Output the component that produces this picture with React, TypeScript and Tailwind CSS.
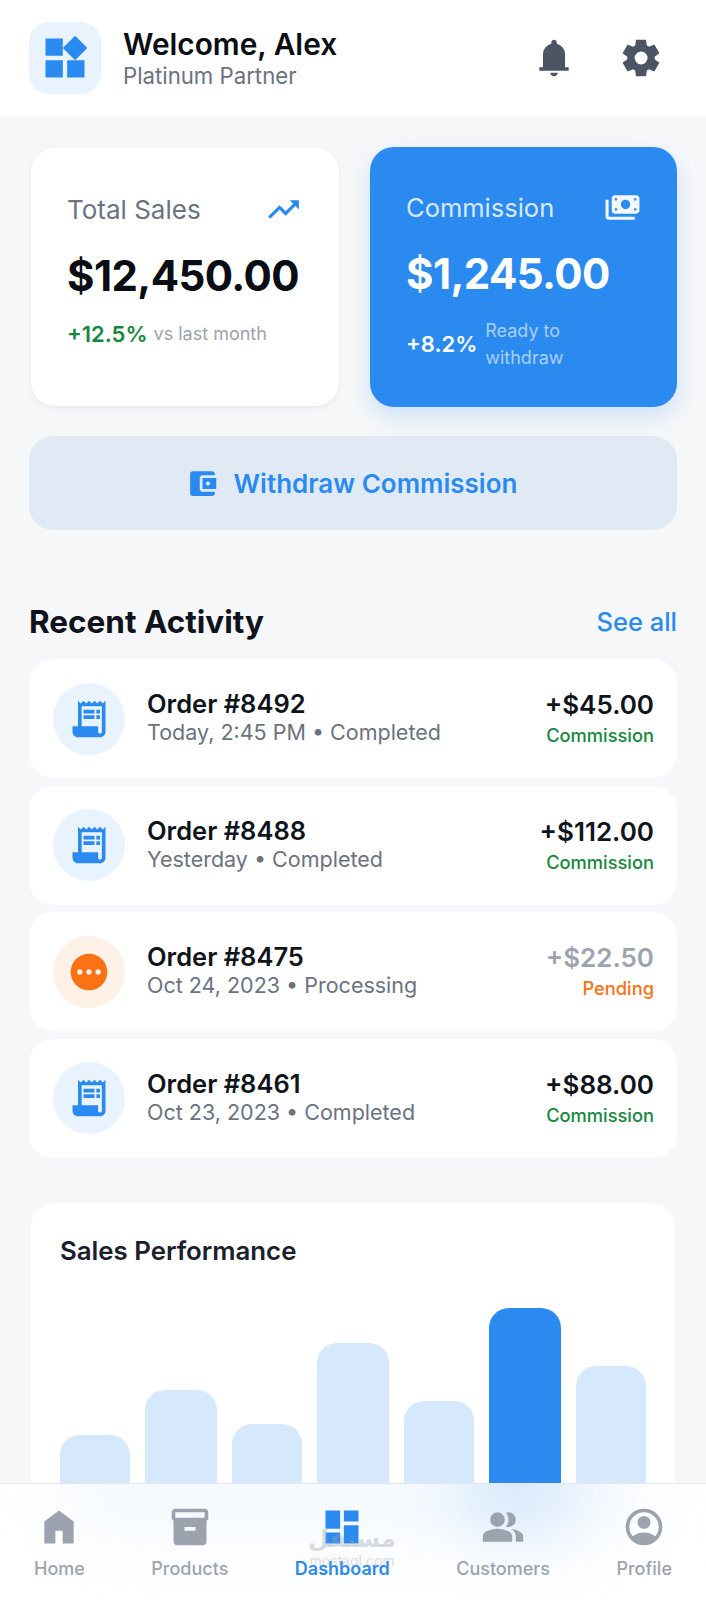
import React from 'react';

const BLUE = 'text-[#2b8aef]';

const paths = {
  widgets: 'M16.65 13L11 7.35 16.65 1.7 22.3 7.35 16.65 13zM3 11V3h8v8H3zm10 10v-8h8v8h-8zM3 21v-8h8v8H3z',
  bell: 'M4 19v-2h2v-7q0-2.075 1.25-3.688T10.5 4.2v-.7q0-.625.438-1.063T12 2t1.063.438.437 1.062v.7q2 .5 3.25 2.113T18 10v7h2v2H4zm8 3q-.825 0-1.413-.588T10 20h4q0 .825-.588 1.412T12 22z',
  gear: 'm9.25 22-.4-3.2q-.325-.125-.612-.3t-.563-.375L4.7 19.375l-2.75-4.75 2.575-1.95Q4.5 12.5 4.5 12.337v-.675q0-.162.025-.337L1.95 9.375l2.75-4.75 2.975 1.25q.275-.2.575-.375t.6-.3l.4-3.2h5.5l.4 3.2q.325.125.613.3t.562.375l2.975-1.25 2.75 4.75-2.575 1.95q.025.175.025.338v.675q0 .162-.05.337l2.575 1.95-2.75 4.75-2.95-1.25q-.275.2-.575.375t-.6.3l-.4 3.2h-5.5zm2.8-6.5q1.45 0 2.475-1.025T15.55 12t-1.025-2.475T12.05 8.5q-1.475 0-2.488 1.025T8.55 12t1.012 2.475T12.05 15.5z',
  trending: 'M16 6l2.29 2.29-4.88 4.88-4-4L2 16.59 3.41 18l6-6 4 4 6.3-6.29L22 12V6z',
  // bill with corner notches, drawn with evenodd so the notches and the centre are cut out
  payments: 'M19 14V6c0-1.1-.9-2-2-2H3c-1.1 0-2 .9-2 2v8c0 1.1.9 2 2 2h14c1.1 0 2-.9 2-2zm-9-1c-1.66 0-3-1.34-3-3s1.34-3 3-3 3 1.34 3 3-1.34 3-3 3zM3 6h1.5v1.5H3zM15.5 6H17v1.5h-1.5zM3 12.5h1.5V14H3zM15.5 12.5H17V14h-1.5zM23 7v11c0 1.1-.9 2-2 2H4v-2h17V7h2z',
  wallet: 'M21 18v1c0 1.1-.9 2-2 2H5c-1.11 0-2-.9-2-2V5c0-1.1.89-2 2-2h14c1.1 0 2 .9 2 2v1h-9c-1.11 0-2 .9-2 2v8c0 1.1.89 2 2 2h9zm-9-2h10V8H12v8zm4-2.5c-.83 0-1.5-.67-1.5-1.5s.67-1.5 1.5-1.5 1.5.67 1.5 1.5-.67 1.5-1.5 1.5z',
  receipt: 'M19.5 3.5 18 2l-1.5 1.5L15 2l-1.5 1.5L12 2l-1.5 1.5L9 2 7.5 3.5 6 2v14H3v3c0 1.66 1.34 3 3 3h12c1.66 0 3-1.34 3-3V2l-1.5 1.5zM19 19c0 .55-.45 1-1 1s-1-.45-1-1v-3H8V5h11v14zM9 7h6v2H9zm7 0h2v2h-2zm-7 3h6v2H9zm7 0h2v2h-2z',
  pending: 'M12 2C6.48 2 2 6.48 2 12s4.48 10 10 10 10-4.48 10-10S17.52 2 12 2zM7 13.5c-.83 0-1.5-.67-1.5-1.5s.67-1.5 1.5-1.5 1.5.67 1.5 1.5-.67 1.5-1.5 1.5zm5 0c-.83 0-1.5-.67-1.5-1.5s.67-1.5 1.5-1.5 1.5.67 1.5 1.5-.67 1.5-1.5 1.5zm5 0c-.83 0-1.5-.67-1.5-1.5s.67-1.5 1.5-1.5 1.5.67 1.5 1.5-.67 1.5-1.5 1.5z',
  home: 'M4 21V9l8-6 8 6v12h-6v-7h-4v7H4z',
  box: 'M20 2H4c-1 0-2 .9-2 2v3.01c0 .72.43 1.34 1 1.69V20c0 1.1 1.1 2 2 2h14c.9 0 2-.9 2-2V8.7c.57-.35 1-.97 1-1.69V4c0-1.1-1-2-2-2zm-5 12H9v-2h6v2zm5-7H4V4l16-.02V7z',
  dashboard: 'M3 13h8V3H3v10zm0 8h8v-6H3v6zm10 0h8V11h-8v10zm0-18v6h8V3h-8z',
  group: 'M1 20v-2.8q0-.85.438-1.562T2.6 14.55q1.55-.775 3.15-1.162T9 13q1.65 0 3.25.388t3.15 1.162q.725.375 1.163 1.088T17 17.2V20H1zm18 0v-3q0-1.1-.612-2.113T16.65 13.15q1.275.15 2.4.513t2.1.887q.9.5 1.375 1.112T23 17v3h-4zM9 12q-1.65 0-2.825-1.175T5 8t1.175-2.825T9 4t2.825 1.175T13 8t-1.175 2.825T9 12zm10-4q0 1.65-1.175 2.825T15 12q-.275 0-.7-.062t-.7-.138q.675-.8 1.038-1.775T15 8t-.362-2.025T13.6 4.2q.35-.125.7-.163T15 4q1.65 0 2.825 1.175T19 8z',
  profile: 'M5.85 17.1q1.275-.975 2.85-1.538T12 15t3.3.563 2.85 1.537q.875-1.025 1.363-2.325T20 12q0-3.325-2.337-5.662T12 4 6.337 6.338 4 12q0 1.475.488 2.775T5.85 17.1zM12 13q-1.475 0-2.488-1.012T8.5 9.5t1.012-2.488T12 6t2.488 1.012T15.5 9.5t-1.012 2.488T12 13zm0 9q-2.075 0-3.9-.788t-3.175-2.137T2.788 15.9 2 12t.788-3.9 2.137-3.175T8.1 2.788 12 2t3.9.788 3.175 2.137T21.213 8.1 22 12t-.788 3.9-2.137 3.175-3.175 2.138T12 22z',
};

function Icon({ d, className, evenOdd }: { d: string; className: string; evenOdd?: boolean }) {
  return (
    <svg viewBox="0 0 24 24" fill="currentColor" className={className}>
      <path d={d} fillRule={evenOdd ? 'evenodd' : undefined} />
    </svg>
  );
}

const orders = [
  { id: 'Order #8492', sub: 'Today, 2:45 PM • Completed', amount: '+$45.00' },
  { id: 'Order #8488', sub: 'Yesterday • Completed', amount: '+$112.00' },
  { id: 'Order #8475', sub: 'Oct 24, 2023 • Processing', amount: '+$22.50', pending: true },
  { id: 'Order #8461', sub: 'Oct 23, 2023 • Completed', amount: '+$88.00' },
];

const bars = [
  { h: 'h-[48px]', w: 'w-[70px]' },
  { h: 'h-[93px]', w: 'w-[72px]' },
  { h: 'h-[59px]', w: 'w-[70px]' },
  { h: 'h-[140px]', w: 'w-[72px]' },
  { h: 'h-[82px]', w: 'w-[70px]' },
  { h: 'h-[175px]', w: 'w-[72px]', active: true },
  { h: 'h-[117px]', w: 'w-[70px]' },
];

const tabs = [
  { label: 'Home', d: paths.home },
  { label: 'Products', d: paths.box },
  { label: 'Dashboard', d: paths.dashboard, active: true },
  { label: 'Customers', d: paths.group },
  { label: 'Profile', d: paths.profile },
];

function OrderRow({ id, sub, amount, pending }: { id: string; sub: string; amount: string; pending?: boolean }) {
  return (
    <div className="flex h-[119px] items-center rounded-[24px] bg-white pl-[24px] pr-[23px]">
      <div className={`flex h-[72px] w-[72px] shrink-0 items-center justify-center rounded-full ${pending ? 'bg-[#fef1e8] text-[#fb7214]' : 'bg-[#e8f3fe] text-[#2b8aef]'}`}>
        <Icon d={pending ? paths.pending : paths.receipt} className="h-[44px] w-[44px]" />
      </div>
      <div className="mb-[1px] ml-[22px] flex-1">
        <div className="text-[25.5px] leading-[30px] font-semibold text-[#0f141c]">{id}</div>
        <div className="mt-[-2px] text-[21.5px] leading-[30px] text-[#6b7280]">{sub}</div>
      </div>
      <div className="text-right">
        <div className={`mt-[3px] text-[26px] leading-[30px] font-semibold ${pending ? 'text-[#9ca3af]' : 'text-[#0f141c]'}`}>{amount}</div>
        <div className={`text-[18.3px] leading-[30px] font-medium ${pending ? 'text-[#fb7214]' : 'text-[#15883e]'}`}>
          {pending ? 'Pending' : 'Commission'}
        </div>
      </div>
    </div>
  );
}

export default function App() {
  return (
    <div className="relative h-[1600px] w-[706px] overflow-hidden bg-[#f6f7f9] font-[Inter,sans-serif]">
      <header className="flex h-[116px] items-center bg-white pl-[29px] pr-[43px]">
        <div className={`flex h-[72px] w-[72px] items-center justify-center rounded-[20px] bg-[#e8f3fe] ${BLUE}`}>
          <Icon d={paths.widgets} className="h-[52px] w-[52px]" />
        </div>
        <div className="ml-[22px] flex-1">
          <div className="text-[29.8px] leading-[36px] font-semibold text-[#0a0d14]">Welcome, Alex</div>
          <div className="text-[22.2px] leading-[28px] text-[#6b7280]">Platinum Partner</div>
        </div>
        <div className="flex gap-[43px] text-[#4b5563]">
          <Icon d={paths.bell} className="h-[44px] w-[44px]" />
          <Icon d={paths.gear} className="h-[44px] w-[44px]" />
        </div>
      </header>

      <main className="px-[29px] pt-[31px]">
        <div className="flex items-center justify-between">
          <div className="ml-[2px] h-[258px] w-[308px] rounded-[24px] bg-white px-[36px] pt-[43px] shadow-[0_2px_6px_rgba(0,0,0,0.06)]">
            <div className="flex items-center justify-between">
              <span className="text-[26px] leading-[34px] text-[#6b7280]">Total Sales</span>
              <Icon d={paths.trending} className={`mr-[1px] h-[37px] w-[37px] ${BLUE}`} />
            </div>
            <div className="mt-[20px] text-[42px] leading-[56px] font-bold tracking-[-0.6px] text-[#0a0d14]">$12,450.00</div>
            <div className="mt-[15px] flex items-center gap-[6px]">
              <span className="text-[22px] leading-[30px] font-semibold text-[#15883e]">+12.5%</span>
              <span className="text-[18px] leading-[30px] text-[#9ca3af]">vs last month</span>
            </div>
          </div>
          <div className="h-[260px] w-[307px] rounded-[24px] bg-[#2b8aef] px-[36px] pt-[42px] shadow-[0_10px_24px_rgba(43,138,239,0.2)]">
            <div className="flex items-center justify-between">
              <span className="text-[25.5px] leading-[34px] text-[#d8e9fc]">Commission</span>
              <Icon d={paths.payments} evenOdd className="h-[37px] w-[37px] -scale-x-100 text-[#f2f8fe]" />
            </div>
            <div className="mt-[20px] text-[42px] leading-[56px] font-bold tracking-[-0.6px] text-white">$1,245.00</div>
            <div className="mt-[15px] flex items-center gap-[8px]">
              <span className="text-[22px] leading-[30px] font-semibold text-white">+8.2%</span>
              <span className="text-[18px] leading-[27px] text-white/60">
                Ready to
                <br />
                withdraw
              </span>
            </div>
          </div>
        </div>

        <button className={`mt-[29px] flex h-[94px] w-full items-center justify-center gap-[15px] rounded-[24px] bg-[#e0eaf5] pr-[3px] ${BLUE}`}>
          <Icon d={paths.wallet} className="h-[33px] w-[33px]" />
          <span className="text-[26px] font-semibold">Withdraw Commission</span>
        </button>

        <div className="mt-[72px] flex items-center justify-between">
          <h2 className="text-[31.5px] leading-[40px] font-bold text-[#0f141c]">Recent Activity</h2>
          <span className={`text-[25.5px] leading-[40px] font-medium ${BLUE}`}>See all</span>
        </div>

        <div className="mt-[17px] flex flex-col gap-[7.67px]">
          {orders.map((o) => (
            <OrderRow key={o.id} {...o} />
          ))}
        </div>

        <section className="mx-[2px] mt-[45px] h-[360px] rounded-[24px] bg-white px-[29px] pt-[30px]">
          <h3 className="text-[25.8px] leading-[36px] font-semibold text-[#1a202c]">Sales Performance</h3>
          <div className="mt-[22px] flex h-[192px] items-end justify-between">
            {bars.map((b, i) => (
              <div key={i} className={`rounded-t-[20px] ${b.h} ${b.w} ${b.active ? 'bg-[#2b8aef]' : 'bg-[#d6e8fc]'}`} />
            ))}
          </div>
        </section>
      </main>

      <nav className="absolute inset-x-0 bottom-0 flex h-[117px] justify-between overflow-hidden border-t border-[#e5e7eb] bg-white px-[34px] pt-[21px]">
        <div className="absolute left-[60px] right-[60px] top-[-30px] h-[70px] rounded-full bg-[#d6e8fc]/40 blur-2xl" />
        <div className="absolute left-[472px] top-[-40px] h-[85px] w-[90px] rounded-full bg-[#2b8aef]/25 blur-2xl" />
        {tabs.map((t) => (
          <div key={t.label} className={`relative flex flex-col items-center ${t.active ? BLUE : 'text-[#9ca3af]'}`}>
            <Icon d={t.d} className="h-[44px] w-[44px]" />
            <span className={`mt-[6px] text-[18px] leading-[28px] ${t.active ? 'font-semibold' : 'font-medium'}`}>{t.label}</span>
          </div>
        ))}
      </nav>

      <div className="pointer-events-none absolute left-[306px] top-[1525px] flex w-[92px] flex-col items-center text-[#9ca3af]/40">
        <span className="font-['DejaVu_Sans',sans-serif] text-[24px] leading-[28px] font-bold">مستقل</span>
        <span className="text-[14px] leading-[16px]">mostaql.com</span>
      </div>
    </div>
  );
}
